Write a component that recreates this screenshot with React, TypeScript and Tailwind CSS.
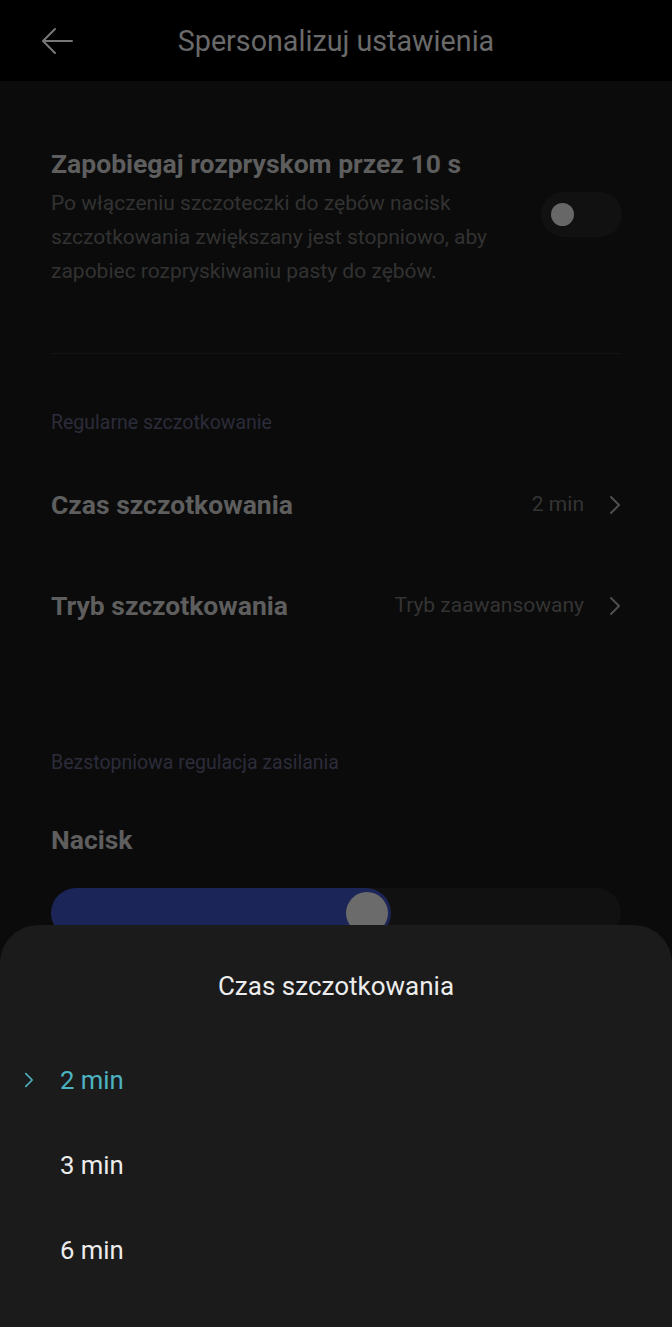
import React from "react";

const font = { fontFamily: "Roboto, 'Noto Sans', sans-serif" };

function Chevron({ className }: { className?: string }) {
  return (
    <svg className={className} viewBox="0 0 12 20" fill="none" stroke="currentColor" strokeWidth={2} strokeLinecap="round" strokeLinejoin="round">
      <path d="M2 2l8 8-8 8" />
    </svg>
  );
}

function Row({ label, value }: { label: string; value: string }) {
  return (
    <div className="flex h-[101px] items-center">
      <div className="flex-1 text-[26.5px] font-bold leading-8 text-[#5e5e5e]">{label}</div>
      <div className="text-[21px] text-[#343434]">{value}</div>
      <Chevron className="ml-[25px] h-5 w-3 text-[#4f4f4f]" />
    </div>
  );
}

export default function App() {
  const options = ["2 min", "3 min", "6 min"];
  const selected = 0;

  return (
    <div className="relative flex h-[1327px] w-full flex-col overflow-hidden bg-[#0b0b0b]" style={font}>
      {/* header */}
      <div className="relative flex h-[81px] items-center justify-center bg-black">
        <svg className="absolute left-[41px] top-[27px] h-[28px] w-[32px] text-[#777]" viewBox="0 0 32 28" fill="none" stroke="currentColor" strokeWidth={2} strokeLinecap="round" strokeLinejoin="round">
          <path d="M31 14H2M14 2L2 14l12 12" />
        </svg>
        <div className="text-[28.7px] leading-8 text-[#6a6a6a]">Spersonalizuj ustawienia</div>
      </div>

      <div className="px-[51px] pt-[67px]">
        <div className="flex items-center">
          <div className="flex-1">
            <div className="text-[26.5px] font-bold leading-8 text-[#5e5e5e]">Zapobiegaj rozpryskom przez 10 s</div>
            <div className="mt-[6px] w-[450px] text-[21px] leading-[34px] text-[#323232]">
              Po włączeniu szczoteczki do zębów nacisk szczotkowania zwiększany jest stopniowo, aby zapobiec rozpryskiwaniu pasty do zębów.
            </div>
          </div>
          <div className="-mr-px mt-[-7px] flex h-[45px] w-[81px] shrink-0 items-center rounded-full bg-[#111111] pl-[10px]">
            <div className="h-[23px] w-[23px] rounded-full bg-[#676767]" />
          </div>
        </div>

        <div className="mt-[65px] h-px bg-[#141414]" />

        <div className="mt-[57px] text-[19.5px] leading-6 text-[#2c2c3a]">Regularne szczotkowanie</div>
        <div className="mt-[19px]">
          <Row label="Czas szczotkowania" value="2 min" />
          <Row label="Tryb szczotkowania" value="Tryb zaawansowany" />
        </div>

        <div className="mt-[95px] text-[19.5px] leading-6 text-[#2c2c3a]">Bezstopniowa regulacja zasilania</div>
        <div className="mt-[49px] text-[26.5px] font-bold leading-8 text-[#5e5e5e]">Nacisk</div>

        <div className="mt-[32px] flex h-[50px] rounded-full bg-[#111111]">
          <div className="flex h-full w-[340px] items-center justify-end rounded-full bg-[#1c2557] pr-[3px]">
            <div className="h-[42px] w-[42px] rounded-full bg-[#6b6b6b]" />
          </div>
        </div>
      </div>

      {/* bottom sheet */}
      <div className="absolute bottom-0 left-0 right-0 h-[402px] rounded-t-[38px] bg-[#1b1b1b] pt-[45px]">
        <div className="text-center text-[26px] leading-8 text-[#ececec]">Czas szczotkowania</div>
        <div className="mt-[35px]">
          {options.map((o, i) => (
            <div key={o} className="flex h-[85px] items-center">
              <div className="flex w-[60px] justify-center">
                {i === selected && <Chevron className="ml-[-2px] h-[16px] w-[10px] text-[#4db3c2]" />}
              </div>
              <div className={`text-[25.7px] leading-8 ${i === selected ? "text-[#4db3c2]" : "text-[#ececec]"}`}>{o}</div>
            </div>
          ))}
        </div>
      </div>
    </div>
  );
}
